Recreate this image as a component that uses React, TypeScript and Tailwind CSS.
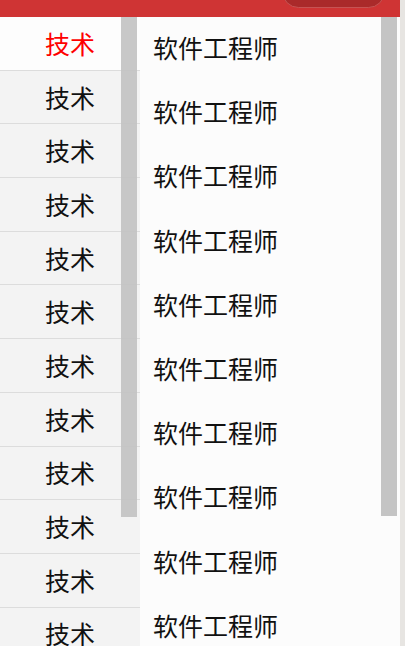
import React from "react";

const leftItems = Array.from({ length: 13 }, (_, i) => i);
const rightItems = Array.from({ length: 11 }, (_, i) => i);

export default function App() {
  return (
    <div
      className="w-[405px] h-[646px] overflow-hidden flex bg-[#e7e5e2]"
      style={{ fontFamily: '"Noto Sans CJK SC", "Noto Sans", sans-serif' }}
    >
      <div className="w-[400px] h-full flex flex-col">
        <div className="h-[17px] shrink-0 bg-[#cf3434] relative overflow-hidden">
          <div className="absolute left-[282px] top-[-25px] w-[103px] h-[33px] rounded-full bg-[#aa2a2a] border border-[#c65453]" />
        </div>
        <div className="flex flex-1 overflow-hidden">
          <div className="w-[140px] shrink-0 relative">
            {leftItems.map((i) => (
              <div
                key={i}
                className={`h-[53.7px] border-b border-[#dcdcdc] flex items-center justify-center text-[25px] leading-none ${
                  i === 0 ? "bg-[#fdfdfd] text-[#ff0000]" : "bg-[#f3f3f3] text-[#111111]"
                }`}
              >
                技术
              </div>
            ))}
            <div className="absolute left-[121px] top-0 w-[16px] h-[500px] bg-[#c2c2c2]/90" />
          </div>
          <div className="flex-1 bg-[#fcfcfc] relative">
            {rightItems.map((i) => (
              <div
                key={i}
                className="h-[64.2px] flex items-center pl-[13px] pb-[3px] text-[25px] leading-none text-[#111111]"
              >
                软件工程师
              </div>
            ))}
            <div className="absolute left-[241px] top-0 w-[16px] h-[499px] bg-[#c4c4c4]" />
          </div>
        </div>
      </div>
      <div className="w-[5px] h-full bg-[#e7e5e2]" />
    </div>
  );
}
